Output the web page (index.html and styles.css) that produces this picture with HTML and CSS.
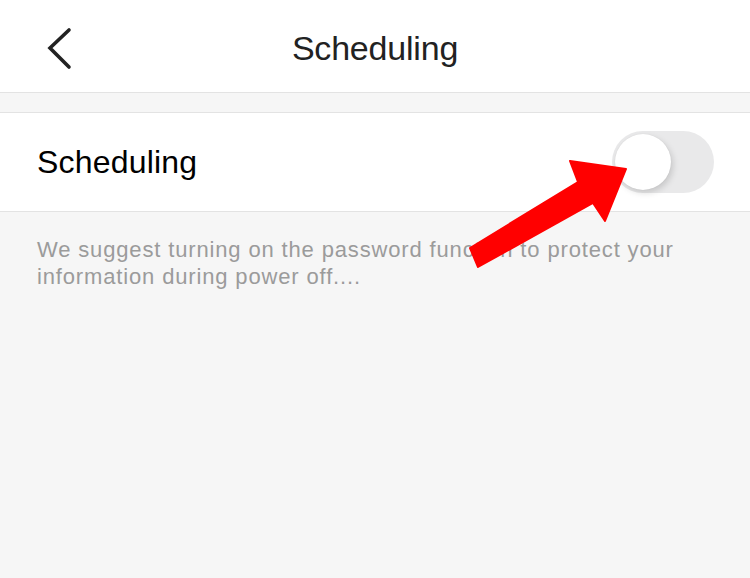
FILE: index.html
```html
<!DOCTYPE html>
<html>
<head>
<meta charset="utf-8">
<link rel="stylesheet" href="styles.css">
</head>
<body>
<div class="page">
  <header class="nav">
    <div class="back">
      <svg width="40" height="50" viewBox="0 0 40 50"><polyline points="31,6 12,24 31,43" fill="none" stroke="#222" stroke-width="3.6" stroke-linecap="round" stroke-linejoin="miter"/></svg>
    </div>
    <div class="title">Scheduling</div>
  </header>
  <div class="spacer"></div>
  <div class="row">
    <div class="label">Scheduling</div>
    <div class="toggle"><div class="knob"></div></div>
  </div>
  <p class="desc">We suggest turning on the password function to protect your information during power off....</p>
  <svg class="arrow" width="750" height="578" viewBox="0 0 750 578"><polygon points="470,248 578,182 570,161 626,169 605,221 593,203 478,267" fill="#ff0000" stroke="#ff0000" stroke-width="2" stroke-linejoin="round"/></svg>
</div>
</body>
</html>
```

FILE: styles.css
```css
html, body {
  margin: 0;
  padding: 0;
  background: #f6f6f6;
}
.page {
  position: relative;
  width: 750px;
  height: 578px;
  overflow: hidden;
  font-family: "Liberation Sans", Arial, sans-serif;
}
.nav {
  height: 92px;
  background: #fff;
  border-bottom: 1px solid #e3e3e3;
  display: flex;
  align-items: center;
  justify-content: center;
  position: relative;
}
.back {
  position: absolute;
  left: 38px;
  top: 24px;
  width: 40px;
  height: 50px;
}
.back svg { display: block; }
.title {
  font-size: 34px;
  color: #222;
  letter-spacing: -0.2px;
  margin-top: 4px;
}
.spacer {
  height: 19px;
}
.row {
  height: 98px;
  background: #fff;
  border-top: 1px solid #e3e3e3;
  border-bottom: 1px solid #e3e3e3;
  display: flex;
  align-items: center;
  justify-content: space-between;
  padding: 0 36px 0 37px;
}
.label {
  font-size: 32px;
  color: #000;
  letter-spacing: 0.2px;
}
.toggle {
  width: 102px;
  height: 62px;
  border-radius: 31px;
  background: #e9e9ea;
  display: flex;
  align-items: center;
  padding-left: 3px;
  box-sizing: border-box;
}
.knob {
  width: 56px;
  height: 56px;
  border-radius: 50%;
  background: #fff;
  box-shadow: 2px 3px 6px rgba(0,0,0,0.15), 0 0 1px rgba(0,0,0,0.1);
}
.desc {
  margin: 0;
  padding: 24px 30px 0 37px;
  font-size: 22px;
  line-height: 27px;
  letter-spacing: 0.85px;
  color: #9b9b9b;
}
.arrow {
  position: absolute;
  left: 0;
  top: 0;
  pointer-events: none;
}
```
